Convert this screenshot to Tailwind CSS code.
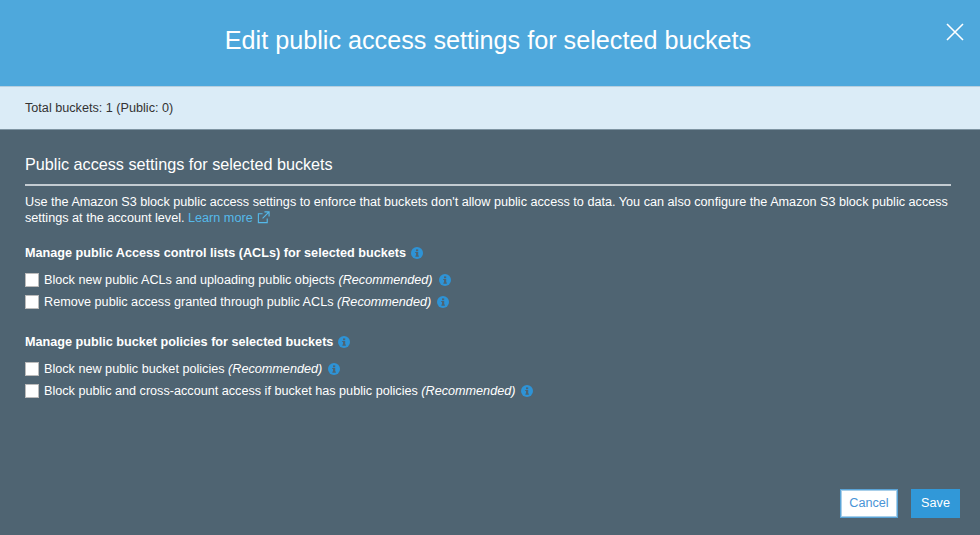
<!DOCTYPE html>
<html lang="en">
<head>
  <meta charset="UTF-8" />
  <title>Edit public access settings</title>
  <script src="https://cdn.jsdelivr.net/npm/@tailwindcss/browser@4"></script>
</head>
<body class="w-[980px] h-[535px] overflow-hidden flex flex-col bg-[#4f6472] font-['Liberation_Sans',Arial,sans-serif] text-white">
  <!-- Header -->
  <header class="relative h-[86px] shrink-0 bg-[#4ea8dc] flex items-center justify-center">
    <h1 class="text-[25.2px] leading-none -mt-[4px] -ml-[4px]">Edit public access settings for selected buckets</h1>
    <button class="absolute top-[23px] right-[16px] w-[18px] h-[18px]">
      <svg viewBox="0 0 18 18" class="w-[18px] h-[18px]" fill="none" stroke="white" stroke-width="1.6"><path d="M1 1l16 16M17 1L1 17"/></svg>
    </button>
  </header>

  <!-- Totals bar -->
  <div class="h-[44px] shrink-0 bg-[#dbecf7] border-t border-[#b7cfdf] border-b border-b-[#7f95a3] pl-[25px] flex items-center text-[12.65px] text-[#333]">
    Total buckets: 1 (Public: 0)
  </div>

  <!-- Settings -->
  <main class="pl-[25px] pr-[29px] pt-[24px]">
    <h2 class="text-[16.2px] leading-[20px] pb-[10px] border-b-2 border-[#c4ccd2]">Public access settings for selected buckets</h2>
    <p class="mt-[8px] text-[12.65px] leading-[16px]">Use the Amazon S3 block public access settings to enforce that buckets don't allow public access to data. You can also configure the Amazon S3 block public access settings at the account level. <a class="text-[#55b9ea]">Learn more <svg viewBox="0 0 14 14" class="inline-block w-[13px] h-[13px] align-[-2px] ml-[1px]" fill="none" stroke="currentColor" stroke-width="1.2"><path d="M11 8v4.5H1.5V3H6M8 1h5v5M13 1L6 8"/></svg></a></p>

    <section class="mt-[19px]">
      <h3 class="flex items-center gap-[5px] text-[12.65px] font-bold leading-[16px]">Manage public Access control lists (ACLs) for selected buckets
        <svg viewBox="0 0 12 12" class="w-[12px] h-[12px]"><circle cx="6" cy="6" r="6" fill="#2e93d6"/><rect x="5" y="5" width="2.2" height="4.4" fill="#4f6472"/><rect x="4.2" y="8.6" width="3.8" height="1" fill="#4f6472"/><rect x="4.2" y="5" width="1.8" height="1" fill="#4f6472"/><rect x="5" y="2.4" width="2.2" height="1.8" fill="#4f6472"/></svg>
      </h3>
      <div class="mt-[11px] flex flex-col gap-[6px]">
        <label class="flex items-center h-[16px] text-[12.65px]">
          <span class="w-[14px] h-[14px] bg-white border border-[#bbb] mr-[5px]"></span>
          <span>Block new public ACLs and uploading public objects <i>(Recommended)</i></span>
          <svg viewBox="0 0 12 12" class="w-[12px] h-[12px] ml-[6px]"><circle cx="6" cy="6" r="6" fill="#2e93d6"/><rect x="5" y="5" width="2.2" height="4.4" fill="#4f6472"/><rect x="4.2" y="8.6" width="3.8" height="1" fill="#4f6472"/><rect x="4.2" y="5" width="1.8" height="1" fill="#4f6472"/><rect x="5" y="2.4" width="2.2" height="1.8" fill="#4f6472"/></svg>
        </label>
        <label class="flex items-center h-[16px] text-[12.65px]">
          <span class="w-[14px] h-[14px] bg-white border border-[#bbb] mr-[5px]"></span>
          <span>Remove public access granted through public ACLs <i>(Recommended)</i></span>
          <svg viewBox="0 0 12 12" class="w-[12px] h-[12px] ml-[6px]"><circle cx="6" cy="6" r="6" fill="#2e93d6"/><rect x="5" y="5" width="2.2" height="4.4" fill="#4f6472"/><rect x="4.2" y="8.6" width="3.8" height="1" fill="#4f6472"/><rect x="4.2" y="5" width="1.8" height="1" fill="#4f6472"/><rect x="5" y="2.4" width="2.2" height="1.8" fill="#4f6472"/></svg>
        </label>
      </div>
    </section>

    <section class="mt-[24px]">
      <h3 class="flex items-center gap-[5px] text-[12.65px] font-bold leading-[16px]">Manage public bucket policies for selected buckets
        <svg viewBox="0 0 12 12" class="w-[12px] h-[12px]"><circle cx="6" cy="6" r="6" fill="#2e93d6"/><rect x="5" y="5" width="2.2" height="4.4" fill="#4f6472"/><rect x="4.2" y="8.6" width="3.8" height="1" fill="#4f6472"/><rect x="4.2" y="5" width="1.8" height="1" fill="#4f6472"/><rect x="5" y="2.4" width="2.2" height="1.8" fill="#4f6472"/></svg>
      </h3>
      <div class="mt-[11px] flex flex-col gap-[6px]">
        <label class="flex items-center h-[16px] text-[12.65px]">
          <span class="w-[14px] h-[14px] bg-white border border-[#bbb] mr-[5px]"></span>
          <span>Block new public bucket policies <i>(Recommended)</i></span>
          <svg viewBox="0 0 12 12" class="w-[12px] h-[12px] ml-[6px]"><circle cx="6" cy="6" r="6" fill="#2e93d6"/><rect x="5" y="5" width="2.2" height="4.4" fill="#4f6472"/><rect x="4.2" y="8.6" width="3.8" height="1" fill="#4f6472"/><rect x="4.2" y="5" width="1.8" height="1" fill="#4f6472"/><rect x="5" y="2.4" width="2.2" height="1.8" fill="#4f6472"/></svg>
        </label>
        <label class="flex items-center h-[16px] text-[12.65px]">
          <span class="w-[14px] h-[14px] bg-white border border-[#bbb] mr-[5px]"></span>
          <span>Block public and cross-account access if bucket has public policies <i>(Recommended)</i></span>
          <svg viewBox="0 0 12 12" class="w-[12px] h-[12px] ml-[6px]"><circle cx="6" cy="6" r="6" fill="#2e93d6"/><rect x="5" y="5" width="2.2" height="4.4" fill="#4f6472"/><rect x="4.2" y="8.6" width="3.8" height="1" fill="#4f6472"/><rect x="4.2" y="5" width="1.8" height="1" fill="#4f6472"/><rect x="5" y="2.4" width="2.2" height="1.8" fill="#4f6472"/></svg>
        </label>
      </div>
    </section>
  </main>

  <!-- Footer buttons -->
  <footer class="mt-auto mb-[17px] mr-[20px] flex justify-end gap-[13px] text-[12.65px]">
    <button class="w-[58px] h-[29px] bg-white border border-[#5aa3d6] shadow-[inset_0_0_0_1px_#a9cfe9] text-[#4a94d6]">Cancel</button>
    <button class="w-[49px] h-[29px] bg-[#3198d8] text-white">Save</button>
  </footer>
</body>
</html>
